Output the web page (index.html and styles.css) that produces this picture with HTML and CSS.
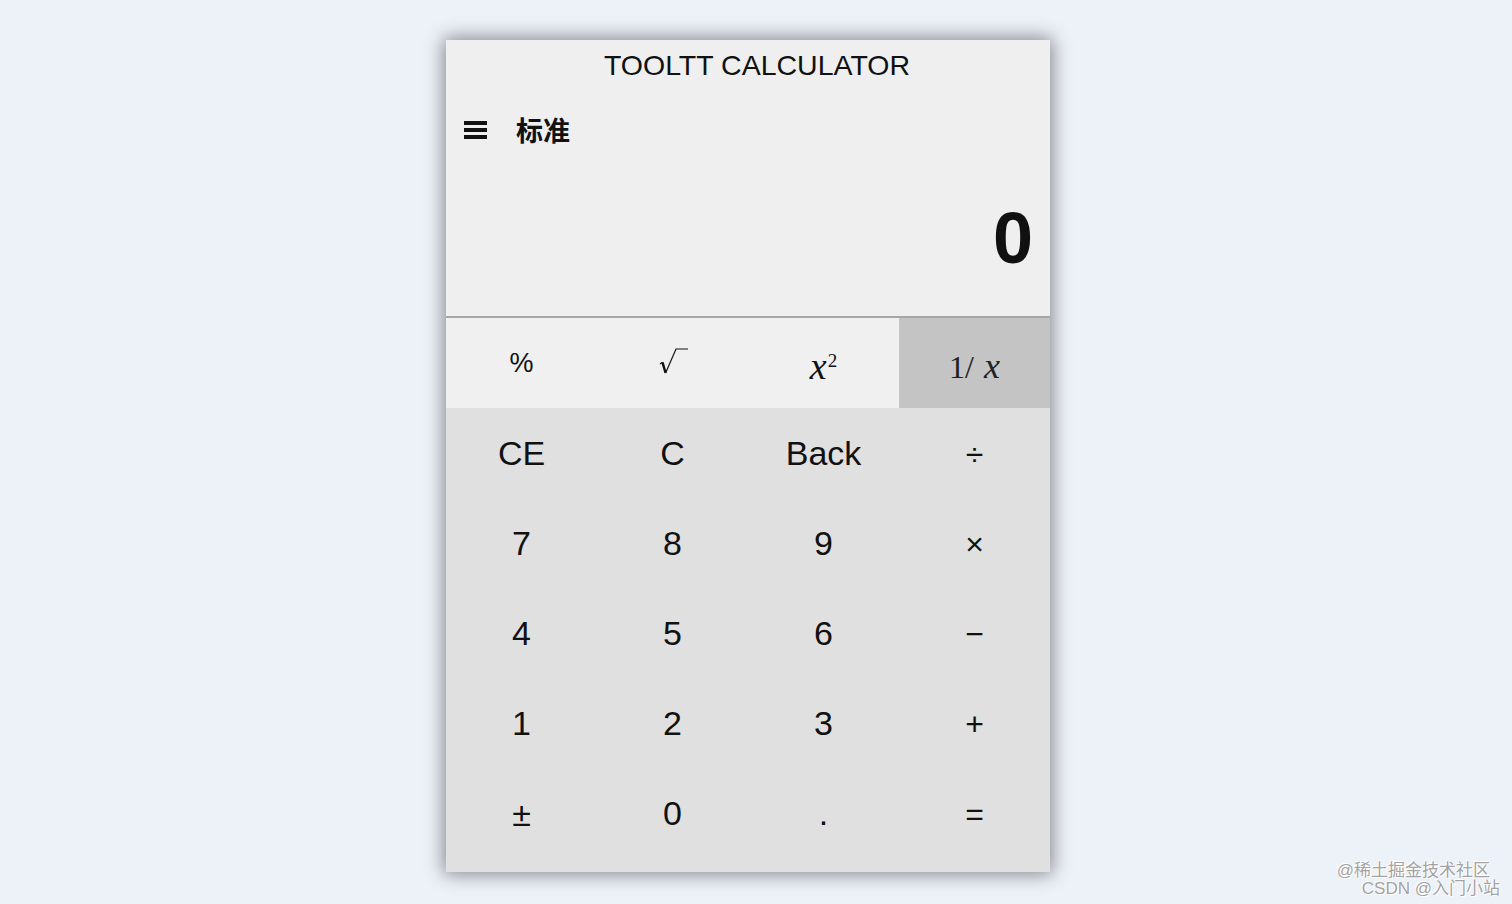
FILE: index.html
```html
<!DOCTYPE html>
<html lang="zh">
<head>
<meta charset="utf-8">
<title>TOOLTT CALCULATOR</title>
<link rel="stylesheet" href="styles.css">
</head>
<body>
<div class="calc">
  <div class="title">TOOLTT CALCULATOR</div>
  <div class="mode">
    <span class="menu"><i></i><i></i><i></i></span>
    <span class="mode-name">标准</span>
  </div>
  <div class="display">0</div>
  <div class="funcs">
    <div class="fkey pct">%</div>
    <div class="fkey">
      <svg class="sqrt" width="32" height="30" viewBox="0 0 32 30">
        <path d="M2 18 L4.5 16.3" stroke="#111" stroke-width="1.2" fill="none"/>
        <path d="M4.5 16.3 L7.6 27" stroke="#111" stroke-width="2.4" fill="none"/>
        <path d="M7.6 27 L18 3 H30" stroke="#111" stroke-width="1.2" fill="none"/>
      </svg>
    </div>
    <div class="fkey serif"><span class="xsq"><span class="it">x</span><sup class="sq">2</sup></span></div>
    <div class="fkey serif inv"><span class="recip">1/<span class="gap"></span><span class="it">x</span></span></div>
  </div>
  <div class="keys">
    <div class="key">CE</div>
    <div class="key">C</div>
    <div class="key">Back</div>
    <div class="key op">÷</div>
    <div class="key">7</div>
    <div class="key">8</div>
    <div class="key">9</div>
    <div class="key op">×</div>
    <div class="key">4</div>
    <div class="key">5</div>
    <div class="key">6</div>
    <div class="key op">−</div>
    <div class="key">1</div>
    <div class="key">2</div>
    <div class="key">3</div>
    <div class="key op">+</div>
    <div class="key op pm">±</div>
    <div class="key">0</div>
    <div class="key">.</div>
    <div class="key op">=</div>
  </div>
</div>
<div class="watermark">
  <div class="wm1">@稀土掘金技术社区</div>
  <div class="wm2">CSDN @入门小站</div>
</div>
</body>
</html>
```

FILE: styles.css
```css
html, body {
  margin: 0;
  padding: 0;
}
body {
  background: #edf1f8;
  font-family: "Liberation Sans", Arial, "Noto Sans CJK SC", sans-serif;
  color: #111;
  height: 904px;
  overflow: hidden;
  position: relative;
}
.calc {
  width: 604px;
  margin: 40px 0 0 446px;
  box-shadow: 0 0 18px 2px rgba(0, 0, 0, 0.45);
  padding-bottom: 14px;
  background-color: #e0e0e0;
}
.title {
  height: 50px;
  line-height: 50px;
  text-align: center;
  font-size: 28.5px;
  padding-left: 18px;
  background: #efefef;
  color: #111;
}
.mode {
  height: 80px;
  display: flex;
  align-items: center;
  padding-left: 18px;
  gap: 29px;
  background: #efefef;
}
.menu {
  width: 23px;
  height: 18px;
  display: flex;
  flex-direction: column;
  justify-content: space-between;
}
.menu i {
  display: block;
  height: 4px;
  background: #111;
}
.mode-name {
  font-family: "Noto Sans CJK SC", sans-serif;
  font-weight: 700;
  font-size: 27px;
  line-height: 1;
  margin-top: -2px;
}
.display {
  box-sizing: border-box;
  height: 148px;
  line-height: 136px;
  padding: 0 17px 10px 0;
  text-align: right;
  font-size: 72px;
  font-weight: 700;
  background: #efefef;
  border-bottom: 2px solid #a6a6a6;
}
.funcs {
  display: grid;
  grid-template-columns: repeat(4, 1fr);
  height: 90px;
  background: #f0f0f0;
}
.fkey {
  display: flex;
  align-items: center;
  justify-content: center;
}
.pct {
  font-size: 27px;
}
.sqrt {
  margin-left: 2px;
  margin-top: -4px;
}
.serif {
  font-family: "Liberation Serif", "Times New Roman", serif;
  font-size: 33px;
}
.it {
  font-style: italic;
}
.xsq {
  padding-top: 6px;
}
.xsq .it {
  font-size: 38px;
}
.sq {
  font-size: 19px;
  vertical-align: 0;
  position: relative;
  top: -12px;
  margin-left: 1px;
  line-height: 0;
}
.inv {
  background: #c4c4c4;
  color: #222;
}
.recip {
  padding-top: 6px;
  font-size: 32px;
}
.gap {
  display: inline-block;
  width: 10px;
}
.recip .it {
  font-size: 36px;
}
.keys {
  display: grid;
  grid-template-columns: repeat(4, 1fr);
  grid-auto-rows: 90px;
  background: #e0e0e0;
}
.key {
  text-align: center;
  line-height: 90px;
  font-size: 34px;
}
.key.op {
  font-size: 32px;
  padding-top: 3px;
  line-height: 87px;
}
.key.pm {
  font-size: 34px;
}
.watermark {
  position: absolute;
  right: 12px;
  bottom: 6px;
  text-align: right;
  font-family: "Liberation Sans", "Noto Sans CJK SC", sans-serif;
  font-size: 17px;
  line-height: 18px;
  color: #a2a2a2;
  text-shadow: 0 0 1px #fff, 1px 1px 0 #fff, -1px -1px 0 #fff;
}
.wm1 {
  padding-right: 10px;
}
```
